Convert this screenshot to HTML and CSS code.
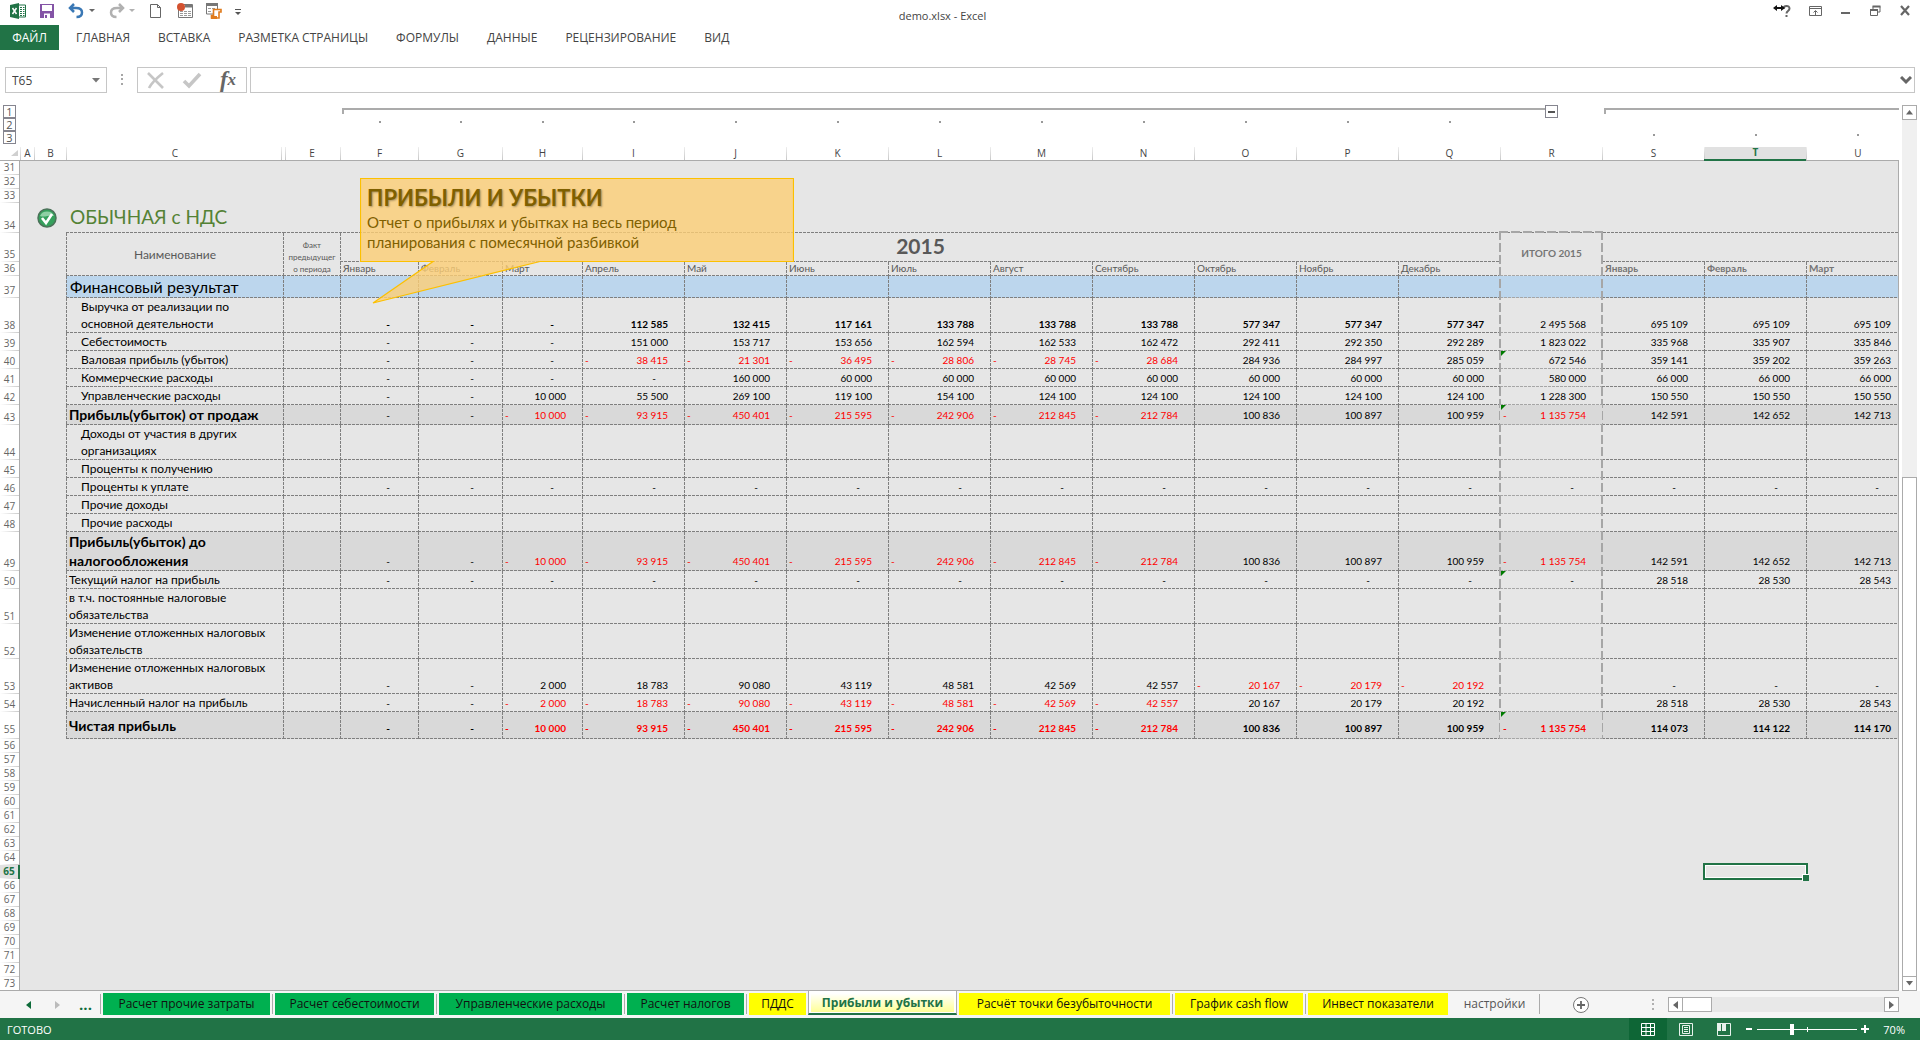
FILE: index.html
```
<!DOCTYPE html>
<html lang="ru">
<head>
<meta charset="UTF-8">
<meta name="viewport" content="width=device-width,initial-scale=1.0">
<title>demo.xlsx - Excel</title>
<link rel="stylesheet" href="styles.css">
</head>

<body>
<!-- ===== Заголовок окна ===== -->
<header class="titlebar">
  <div class="quick">
    <svg width="16" height="16" viewBox="0 0 16 16"><path d="M8 2h7.5v12H8z" fill="#fff" stroke="#217346"/><path d="M10 4.500h2M13 4.500h1.500M10 6.500h2M13 6.500h1.500M10 8.500h2M13 8.500h1.500M10 10.500h2M13 10.500h1.500M10 12.500h2M13 12.500h1.500" stroke="#217346"/><path d="M0 2l9-2v16l-9-2z" fill="#217346"/><path d="M2.500 5l4 6M6.500 5l-4 6" stroke="#fff" stroke-width="1.500"/></svg>
    <button aria-label="Сохранить"><svg width="16" height="16" viewBox="0 0 16 16"><path d="M1 1h14v14H1z" fill="#8454a6"/><path d="M3 2h10v6H3zM5 10.500h6V15H5z" fill="#fff"/><path d="M6 12h2v3H6z" fill="#8454a6"/></svg></button>
    <button aria-label="Отменить"><svg width="27" height="16" viewBox="0 0 27 16"><path d="M6 1L2 5l4 4M2 5h6c4 0 6 1.500 6 4.500S11.500 14 8.500 14" fill="none" stroke="#3a78b5" stroke-width="2.500"/><path d="M21 6h6l-3 3z" fill="#666"/></svg></button>
    <button aria-label="Вернуть"><svg width="27" height="16" viewBox="0 0 27 16"><path d="M11 1l4 4-4 4M15 5H9C5 5 3 6.500 3 9.500S5.500 14 8.500 14" fill="none" stroke="#b1b1b1" stroke-width="2.500"/><path d="M21 6h6l-3 3z" fill="#b1b1b1"/></svg></button>
    <button aria-label="Создать"><svg width="16" height="16" viewBox="0 0 16 16"><path d="M2.500 1.500h7l3 3v10h-10zM9.500 1.500v3h3" fill="#fff" stroke="#666"/></svg></button>
    <button aria-label="Записать макрос"><svg width="16" height="16" viewBox="0 0 16 16"><path d="M1.500 1.500h14v13h-14z" fill="#fff" stroke="#777"/><path d="M8 3h7" stroke="#777" stroke-width="3"/><path d="M3 8.500h3M7 8.500h3M11 8.500h3M3 10.500h3M7 10.500h3M11 10.500h3M3 12.500h3M7 12.500h3M11 12.500h3" stroke="#999"/><circle cx="4" cy="4" r="4" fill="#d35230"/></svg></button>
    <button aria-label="Макросы"><svg width="16" height="16" viewBox="0 0 16 16"><path d="M.500 1h11v10H.500z" fill="#fff" stroke="#777"/><path d="M0 1.500h12" stroke="#777" stroke-width="3"/><path d="M2 5.500h3M6 5.500h3M2 8.500h3" stroke="#999"/><path d="M7.500 6.500h7.500v2.500h-2v6H5.500v-2.500h2z" fill="#fff" stroke="#e07b1c" stroke-width="1.600"/><path d="M5 13h6v3H5z" fill="#e07b1c"/></svg></button>
    <button aria-label="Настройка панели"><svg width="6" height="16" viewBox="0 0 6 16"><path d="M0 6.500h6" stroke="#555"/><path d="M0 9h6l-3 3z" fill="#555"/></svg></button>
  </div>
  <h1 class="doc-name">demo.xlsx - Excel</h1>
  <div class="window-btns">
    <button aria-label="Справка"><svg width="20" height="16" viewBox="0 0 20 16"><path d="M10.500 6c0-4 6-4 6-.500 0 2.500-3 2.500-3 5" fill="none" stroke="#666" stroke-width="2"/><path d="M12.500 12h2v2h-2z" fill="#666"/><path d="M0 5l4-3v2h4V2l4 3-4 3V6H4v2z" fill="#111"/></svg></button>
    <button aria-label="Параметры ленты"><svg width="16" height="16" viewBox="0 0 16 16"><path d="M2.500 3.500h12v9h-12zM2.500 5.500h12M8.500 12V8M6.500 9.500l2-2 2 2" fill="none" stroke="#666"/></svg></button>
    <button aria-label="Свернуть"><svg width="16" height="16" viewBox="0 0 16 16"><path d="M4 10h9" stroke="#666" stroke-width="2"/></svg></button>
    <button aria-label="Восстановить"><svg width="16" height="16" viewBox="0 0 16 16"><path d="M3.500 7h7v5.500h-7zM6 6V3.500h7V9h-2" fill="none" stroke="#666"/><path d="M3 7h8M5.500 3.500h8" stroke="#666" stroke-width="2"/></svg></button>
    <button aria-label="Закрыть"><svg width="16" height="16" viewBox="0 0 16 16"><path d="M4 3l8 9M12 3l-8 9" stroke="#666" stroke-width="2.200"/></svg></button>
  </div>
</header>

<nav class="ribbon">
  <button class="file">ФАЙЛ</button>
  <button>ГЛАВНАЯ</button>
  <button>ВСТАВКА</button>
  <button>РАЗМЕТКА СТРАНИЦЫ</button>
  <button>ФОРМУЛЫ</button>
  <button>ДАННЫЕ</button>
  <button>РЕЦЕНЗИРОВАНИЕ</button>
  <button>ВИД</button>
</nav>

<!-- ===== Строка формул ===== -->
<div class="formula-bar">
  <div class="name-box">
    <input type="text" value="T65" aria-label="Имя ячейки">
    <button aria-label="Список имён"><svg width="8" height="5" viewBox="0 0 8 5"><path d="M0 0h8L4 4.500z" fill="#777"/></svg></button>
  </div>
  <svg class="grip" width="30" height="12" viewBox="0 0 30 12"><path d="M14 0h2v2h-2zM14 4h2v2h-2zM14 9h2v2h-2z" fill="#a6a6a6"/></svg>
  <div class="fx-btns">
    <button aria-label="Отмена"><svg width="18" height="18" viewBox="0 0 18 18"><path d="M1 2l15 15M16 2C11 6 5 11 2 17" fill="none" stroke="#c6c6c6" stroke-width="2.600"/></svg></button>
    <button aria-label="Ввод"><svg width="20" height="18" viewBox="0 0 20 18"><path d="M2 10l5 5L18 3" fill="none" stroke="#c6c6c6" stroke-width="3.600"/></svg></button>
    <button class="fx" aria-label="Вставить функцию">f<small>x</small></button>
  </div>
  <div class="formula">
    <input type="text" aria-label="Формула">
    <button aria-label="Развернуть"><svg width="12" height="9" viewBox="0 0 12 9"><path d="M1 1l5 5 5-5" fill="none" stroke="#666" stroke-width="3"/></svg></button>
  </div>
</div>

<!-- ===== Лист ===== -->
<main class="workspace">
  <div class="sheet-wrap">
    <div class="outline" id="outline">
      <div class="levels"><button>1</button><button>2</button><button>3</button></div>
      <div class="bracket first"><span class="bar"></span><button aria-label="Свернуть группу"></button></div>
      <div class="bracket second"><span class="bar"></span></div>
    </div>
    <table class="sheet" id="sheet"></table>
    <div class="callout">
      <svg width="434" height="127" viewBox="0 0 434 127"><path d="M.500.500h433v83H180L13 125l60-41.500H.500z" fill="#fdce76" fill-opacity=".8" stroke="#fcc000" stroke-width="1.200"/></svg>
      <div class="callout-text">
        <h2>ПРИБЫЛИ И УБЫТКИ</h2>
        <p>Отчет о прибылях и убытках на весь период<br>планирования с помесячной разбивкой</p>
      </div>
    </div>
  </div>
  <div class="vscroll">
    <button aria-label="Вверх"><svg width="7" height="5" viewBox="0 0 7 5"><path d="M0 4.500h7L3.500 0z" fill="#666"/></svg></button>
    <div class="track"></div>
    <div class="thumb"></div>
    <button aria-label="Вниз"><svg width="7" height="5" viewBox="0 0 7 5"><path d="M0 0h7L3.500 4.500z" fill="#666"/></svg></button>
  </div>
</main>

<!-- ===== Ярлыки листов ===== -->
<nav class="tabs">
  <div class="tab-nav">
    <button aria-label="Назад"><svg width="6" height="8" viewBox="0 0 6 8"><path d="M5 0v8L0 4z" fill="#0e6b3a"/></svg></button>
    <button aria-label="Вперёд"><svg width="6" height="8" viewBox="0 0 6 8"><path d="M1 0v8l5-4z" fill="#bbb"/></svg></button>
    <button class="more">...</button>
  </div>
  <ul class="tab-list">
    <li><button class="green">Расчет прочие затраты</button></li>
    <li><button class="green">Расчет себестоимости</button></li>
    <li><button class="green">Управленческие расходы</button></li>
    <li><button class="green">Расчет налогов</button></li>
    <li><button class="yellow">ПДДС</button></li>
    <li class="active"><button>Прибыли и убытки</button></li>
    <li><button class="yellow">Расчёт точки безубыточности</button></li>
    <li><button class="yellow">График cash flow</button></li>
    <li><button class="yellow">Инвест показатели</button></li>
    <li class="last"><button>настройки</button></li>
  </ul>
  <button class="add" aria-label="Новый лист"><svg width="18" height="18" viewBox="0 0 18 18"><circle cx="9" cy="9" r="7.500" fill="#fff" stroke="#777"/><path d="M5 9h8M9 5v8" stroke="#666" stroke-width="1.800"/></svg></button>
  <svg class="grip" width="30" height="12" viewBox="0 0 30 12"><path d="M14 0h2v2h-2zM14 4h2v2h-2zM14 9h2v2h-2z" fill="#b0b0b0"/></svg>
  <div class="hscroll">
    <button aria-label="Влево"><svg width="5" height="8" viewBox="0 0 5 8"><path d="M5 0v8L0 4z" fill="#666"/></svg></button>
    <div class="thumb"></div>
    <div class="track"></div>
    <button aria-label="Вправо"><svg width="5" height="8" viewBox="0 0 5 8"><path d="M0 0v8l5-4z" fill="#666"/></svg></button>
  </div>
</nav>

<footer class="status">
  <span>ГОТОВО</span>
  <div class="views">
    <button class="on" aria-label="Обычный"><svg width="14" height="13" viewBox="0 0 14 13"><path d="M.500.500h13v12H.500zM.500 4.500h13M.500 8.500h13M5 .500v12M9.500.500v12" fill="none" stroke="#fff"/></svg></button>
    <button aria-label="Разметка страницы"><svg width="14" height="13" viewBox="0 0 14 13"><path d="M.500.500h13v12H.500zM3.500 2.500h7v8h-7zM5 4.500h4M5 6.500h4M5 8.500h4" fill="none" stroke="#e8f2ec"/></svg></button>
    <button aria-label="Страничный"><svg width="14" height="13" viewBox="0 0 14 13"><path d="M.500.500h13v12H.500z" fill="none" stroke="#e8f2ec"/><path d="M0 0h4v8H0zM5 0h4v8H5z" fill="#e8f2ec"/></svg></button>
  </div>
  <button class="zoom-btn" aria-label="Уменьшить"><svg width="8" height="8" viewBox="0 0 8 8"><path d="M1 4h6" stroke="#fff" stroke-width="2"/></svg></button>
  <input class="zoom" type="range" min="0" max="100" value="34" aria-label="Масштаб">
  <button class="zoom-btn" aria-label="Увеличить"><svg width="8" height="8" viewBox="0 0 8 8"><path d="M0 4h8M4 0v8" stroke="#fff" stroke-width="2"/></svg></button>
  <span class="percent">70%</span>
</footer>

<script src="script.js"></script>
</body>
</html>
```
FILE: styles.css
```
/* ==== общие ==== */
*{box-sizing:border-box;margin:0;padding:0}
:root{
  --green:#217346;
  --line:#ababab;
  --dash-h:repeating-linear-gradient(90deg,#7f7f7f 0 3px,transparent 3px 4px);
  --dash-v:repeating-linear-gradient(#7f7f7f 0 3px,transparent 3px 4px);
  --dash-soft:repeating-linear-gradient(90deg,#a6a6a6 0 3px,transparent 3px 4px);
  --frame-h:repeating-linear-gradient(90deg,#a6a6a6 0 9px,transparent 9px 12px);
  --frame-v:repeating-linear-gradient(#a6a6a6 0 9px,transparent 9px 12px);
}
body{
  font-family:"Open Sans","Noto Sans",sans-serif;
  font-size:12px;color:#444;background:#fff;
  height:100vh;display:flex;flex-direction:column;overflow:hidden;
}
button{font:inherit;color:inherit;background:none;border:0;display:flex;align-items:center;justify-content:center}
input{font:inherit;color:inherit;border:0;background:none;outline:0;min-width:0}
svg{display:block;flex:none}

/* ==== заголовок и лента ==== */
.titlebar{
  height:25px;padding:3px 7px 0 10px;
  display:grid;grid-template-columns:1fr auto 1fr;align-items:start;
}
.quick{display:flex;gap:13px}
.doc-name{font-size:11px;font-weight:400;line-height:26px;margin-right:38px}
.window-btns{display:flex;justify-content:flex-end;gap:14px}

.ribbon{display:flex;height:25px;gap:28px;line-height:25px}
.ribbon .file{width:59px;background:var(--green);color:#fff;margin-right:-11px}

/* ==== строка формул ==== */
.formula-bar{display:flex;align-items:center;height:26px;margin:17px 5px 12px}
.name-box,.fx-btns,.formula{display:flex;align-items:center;height:100%;border:1px solid #c6c6c6}
.name-box{width:102px;padding:0 6px}
.name-box input{flex:1}
.fx-btns{width:110px;margin-right:3px}
.fx-btns button{flex:1}
.fx-btns .fx{font:italic bold 23px "Liberation Serif",serif;color:#666}
.fx small{font-size:17px}
.formula{flex:1;padding:0 2px 0 6px}
.formula input{flex:1}

/* ==== рабочая область ==== */
.workspace{flex:1;display:flex;min-height:0}
.sheet-wrap{flex:1;position:relative;min-width:0;overflow:hidden;border-bottom:1px solid var(--line)}

.outline{
  display:grid;height:42px;
  grid-template-rows:13px 13px 13px;
  grid-template-columns:20px 14px 32px 217px 57px 78px 84px 80px repeat(12,102px) 1fr;
}
.levels{grid-area:1/1/4/2;padding-left:3px}
.levels button,.bracket button{width:13px;height:13px;border:1px solid #85858f;font-size:11px;line-height:11px}
.levels button{color:#555}
.bracket{display:flex;padding-left:2px}
.bracket .bar{flex:1;height:6px;margin-top:3px;border-top:2px solid var(--line);border-left:2px solid var(--line)}
.bracket button{margin-right:44px}
.bracket button::before{content:"";width:7px;height:2px;background:#555}
.first{grid-area:1/6/2/19}
.second{grid-area:1/19/2/22}
.dot{width:2px;height:2px;background:#999;align-self:center;justify-self:center;margin:0 0 5px 2px}
.dot.low{grid-row:3}
.dot.high{grid-row:2}
.dot:last-child{margin-left:11px}

/* ==== таблица ==== */
.sheet{width:100%;table-layout:fixed;border-collapse:separate;border-spacing:0;color:#000;background:#e6e6e6}
.sheet th,.sheet td{overflow:visible;white-space:nowrap}
.w-num{width:20px}
.w-a{width:14px}
.w-b{width:32px}
.w-c{width:217px}
.w-e{width:57px}
.w-f{width:78px}
.w-g{width:84px}
.w-h{width:80px}
.w-m{width:102px}

.cols th{
  height:14px;padding:0 0 1px 1px;
  background:#fff linear-gradient(#eee,#c8c8c8) no-repeat left top/1px 100%;
  border-bottom:1px solid var(--line);
  font-size:10px;font-weight:400;line-height:12px;color:#444;
}
.cols th.corner{background:#fff}
.cols th.corner svg{margin-left:10px}
.cols th.col-c{background-image:linear-gradient(#eee,#c8c8c8),linear-gradient(#eee,#c8c8c8);background-position:left top,right 1px top}
.cols th.col-e{background-position:2px 0}
.cols th.col-u{padding-left:11px}
.cols th.sel{background-color:#e1e1e1;border-bottom:2px solid var(--green);color:var(--green);font-weight:700;line-height:11px}

.sheet .num{
  background:#fff linear-gradient(90deg,#fff,#ccc) no-repeat left bottom/100% 1px;
  border-right:1px solid var(--line);
  font-size:10px;font-weight:400;line-height:12px;color:#666;
  vertical-align:bottom;text-align:center;padding-bottom:2px;
}
.sheet .num.sel{background-color:#e1e1e1;border-right:2px solid var(--green);color:var(--green);font-weight:700}

.h14{height:14px}
.h18{height:18px}
.h20{height:20px}
.h22{height:22px}
.h27{height:27px}
.h29{height:29px}
.h30{height:30px}
.h35{height:35px}
.h39{height:39px}

.c{
  font-family:Lato,"Open Sans",sans-serif;font-size:10px;font-weight:400;line-height:13px;
  vertical-align:bottom;text-align:right;padding:0 16px 2px 0;
  background:var(--dash-h) no-repeat left bottom/100% 1px,var(--dash-v) no-repeat left top/1px 100%;
}
.c:last-child{padding-right:7px}
.c.dash{padding-right:28px}
.c.dash:last-child{padding-right:19px}
.c.r{background:var(--dash-soft) no-repeat left bottom/100% 1px}
.c.s,.c.top,.c.title{background:var(--dash-h) no-repeat left bottom/100% 1px}
.c .minus{float:left;padding-left:3px;font-style:normal}
.neg{color:#f00}
.b{font-weight:700}
.c.flag{position:relative}
.flag::before{
  content:"";position:absolute;left:1px;top:0;
  border-top:5px solid #007a00;border-right:5px solid transparent;
}
.c.label{font-size:12px;line-height:17px;text-align:left;padding:0 0 1px 3px}
.c.label.in{padding-left:15px}
.c.label.big{font-size:14px;line-height:19px;font-weight:700}
.c.label.section{font-size:16px;line-height:20px;padding-left:4px}
.section-row .c{background-color:#bcd6ed}
.grey .c{background-color:#d9d9d9}
.grey.h20 .c,.grey.h39 .c{padding-bottom:3px}
.grey.h20 .label,.grey.h39 .label{padding-bottom:1px}
.h27 .c{padding-bottom:4px}
.sheet .h27 .num{padding-bottom:4px}

.c.title{font-size:19px;line-height:26px;color:#548235;text-align:left;padding:0 0 3px 4px}
.check{vertical-align:bottom}
.check svg{margin:0 0 5px 3px}
.c.head{vertical-align:middle;text-align:center;padding:0 0 1px 1px;color:#595959;font-size:12px}
.c.head.fact{font-size:8px;line-height:12px;vertical-align:bottom}
.c.head.year{font-size:21px;font-weight:700;line-height:26px;padding-bottom:3px}
.c.head.total{position:relative;font-size:10px;font-weight:700;color:#757575;padding-bottom:3px}
.c.month{text-align:left;padding:0 0 2px 3px;color:#595959;line-height:12px}
.c.month.next{font-weight:700;color:#757575}

/* рамка вокруг итогового столбца, от шапки до чистой прибыли */
.frame{
  position:absolute;left:-1px;right:-1px;top:-2px;height:508px;
  background:
    var(--frame-h) no-repeat left top/100% 2px,
    var(--frame-h) no-repeat left bottom/100% 2px,
    var(--frame-v) no-repeat left top/2px 100%,
    var(--frame-v) no-repeat right top/2px 100%;
}
.cursor{position:relative}
.cursor::before{
  content:"";position:absolute;inset:-2px -2px -1px -1px;
  border:2px solid var(--green);box-shadow:inset 0 0 0 1px #fff;
}
.cursor::after{
  content:"";position:absolute;right:-3px;bottom:-2px;width:6px;height:6px;
  background:var(--green);border:solid #fff;border-width:1px 0 0 1px;
}
.edge{border-right:1px solid var(--line)}

/* ==== выноска ==== */
.callout{position:absolute;left:360px;top:73px;color:#7f6000;font-family:Lato,"Open Sans",sans-serif}
.callout-text{position:absolute;left:7px;top:6px;white-space:nowrap}
.callout h2{font-size:22px;line-height:28px;font-weight:700;text-shadow:1px 1px 2px rgba(0,0,0,.3)}
.callout p{font-size:15px;line-height:20px}

/* ==== полосы прокрутки ==== */
.vscroll{width:21px;padding:0 3px;display:flex;flex-direction:column}
.vscroll button,.hscroll button{width:15px;height:15px;flex:none;border:1px solid var(--line);background:#fff}
.vscroll .track{flex:357;background:#f0f0f0}
.vscroll .thumb{flex:499;border:1px solid var(--line);border-bottom:0}

/* ==== ярлыки ==== */
.tabs{height:27px;background:#f5f5f5;display:flex;align-items:center;padding:0 21px 0 15px}
.tab-nav{display:grid;grid-template-columns:28px 28px 29px}
.tab-nav .more{color:#0e6b3a;font-weight:700;font-size:15px;line-height:15px}
.tab-list{
  list-style:none;height:100%;display:grid;
  grid-template-columns:172px 164px 188px 122px 62px 149px 215px 133px 145px 90px;
}
.tab-list li{padding:2px 2px 3px 3px;background:linear-gradient(var(--line),var(--line)) no-repeat left 3px/1px 20px}
.tab-list button{width:100%;height:22px;line-height:22px;color:#111;white-space:nowrap}
.tab-list .green{background:#00b050}
.tab-list .yellow{background:#ff0}
.tab-list .active{
  padding:0 2px;height:25px;margin-top:-1px;background:#fff;
  border:solid var(--line);border-width:0 1px;border-bottom:2px solid var(--green);
}
.tab-list .active button{background:linear-gradient(#fff 15%,#ffff96);color:var(--green);font-weight:700;padding-top:3px}
.tab-list .active+li{background:none;padding-left:2px}
.tab-list .last{border-right:1px solid var(--line);background:none;margin:3px 0 4px;padding:0}
.tab-list .last button{color:#555;height:20px;line-height:20px}
.tabs .add{margin-left:32px}
.tabs .grip{margin-left:auto}
.hscroll{display:flex;width:231px;height:15px}
.hscroll .thumb{width:29px;border:1px solid var(--line);border-left:0;background:#fff}
.hscroll .track{flex:1;background:#e8e8e8}

/* ==== строка состояния ==== */
.status{
  height:22px;background:var(--green);color:#fff;font-size:11px;
  display:flex;align-items:center;padding:0 15px 0 7px;
}
.views{margin-left:auto;display:flex;height:100%}
.views button{width:38px}
.views .on{background:#0e6636}
.zoom-btn{width:12px}
.zoom{
  appearance:none;width:100px;height:11px;margin:0 2px;
  background:
    linear-gradient(#fff,#fff) no-repeat left center/100% 1px,
    linear-gradient(#fff,#fff) no-repeat center/1px 5px;
}
.zoom::-webkit-slider-thumb{appearance:none;width:4px;height:11px;background:#fff}
.percent{margin-left:12px}
```
FILE: script.js
```
/* колонки листа: буква -> класс ширины */
const COLS = [['A','w-a'],['B','w-b'],['C','w-c'],['E','w-e'],['F','w-f'],['G','w-g'],['H','w-h'],
  ...'IJKLMNOPQRST'.split('').map(l=>[l,'w-m']),['U','']];

const MONTHS = ['Январь','Февраль','Март','Апрель','Май','Июнь','Июль','Август','Сентябрь','Октябрь','Ноябрь','Декабрь'];
const LOSS = '-93 915|-450 401|-215 595|-242 906|-212 845|-212 784|100 836|100 897|100 959|-1 135 754';

/* [номер, высота, подпись, класс подписи, значения F..U] */
const ROWS = [
  [37,22,'Финансовый результат','section',''],
  [38,35,'Выручка от реализации по<br>основной деятельности','in','-|-|-|112 585|132 415|117 161|133 788|133 788|133 788|577 347|577 347|577 347|2 495 568|695 109|695 109|695 109'],
  [39,18,'Себестоимость','in','-|-|-|151 000|153 717|153 656|162 594|162 533|162 472|292 411|292 350|292 289|1 823 022|335 968|335 907|335 846'],
  [40,18,'Валовая прибыль (убыток)','in','-|-|-|-38 415|-21 301|-36 495|-28 806|-28 745|-28 684|284 936|284 997|285 059|672 546|359 141|359 202|359 263'],
  [41,18,'Коммерческие расходы','in','-|-|-|-|160 000|60 000|60 000|60 000|60 000|60 000|60 000|60 000|580 000|66 000|66 000|66 000'],
  [42,18,'Управленческие расходы','in','-|-|10 000|55 500|269 100|119 100|154 100|124 100|124 100|124 100|124 100|124 100|1 228 300|150 550|150 550|150 550'],
  [43,20,'Прибыль(убыток) от продаж','big','-|-|-10 000|'+LOSS+'|142 591|142 652|142 713'],
  [44,35,'Доходы от участия в других<br>организациях','in',''],
  [45,18,'Проценты к получению','in',''],
  [46,18,'Проценты к уплате','in',Array(16).fill('-').join('|')],
  [47,18,'Прочие доходы','in',''],
  [48,18,'Прочие расходы','in',''],
  [49,39,'Прибыль(убыток) до<br>налогообложения','big','-|-|-10 000|'+LOSS+'|142 591|142 652|142 713'],
  [50,18,'Текущий налог на прибыль','',Array(13).fill('-').join('|')+'|28 518|28 530|28 543'],
  [51,35,'в т.ч. постоянные налоговые<br>обязательства','',''],
  [52,35,'Изменение отложенных налоговых<br>обязательств','',''],
  [53,35,'Изменение отложенных налоговых<br>активов','','-|-|2 000|18 783|90 080|43 119|48 581|42 569|42 557|-20 167|-20 179|-20 192||-|-|-'],
  [54,18,'Начисленный налог на прибыль','','-|-|-2 000|-18 783|-90 080|-43 119|-48 581|-42 569|-42 557|20 167|20 179|20 192||28 518|28 530|28 543'],
  [55,27,'Чистая прибыль','big','-|-|-10 000|'+LOSS+'|114 073|114 122|114 170']
];
const FLAGS = [40,43,50,55];
const CHECK = '<svg width="20" height="20" viewBox="0 0 20 20"><circle cx="10" cy="10" r="9" fill="#35a05c" stroke="#4b7259" stroke-width="1.5"/><path d="M3 8a7.500 7 0 0 1 14 0c-4-2-9 2-14 0z" fill="#8ed0a4"/><path d="M5 10l4 5 6-9" fill="none" stroke="#fff" stroke-width="2.600"/></svg>';

const num = (n,extra='') => `<th scope="row" class="num${extra}">${n}</th>`;

function cell(v,i,row){
  const cls = ['c'];
  if(i===12) cls.push('r');
  if(i===13) cls.push('s');
  if(i===12 && FLAGS.includes(row)) cls.push('flag');
  if(row===55 || (row===38 && i<12)) cls.push('b');
  if(i===15) cls.push('edge');
  if(v==='-') return `<td class="${cls.join(' ')} dash">-</td>`;
  if(v[0]==='-') return `<td class="${cls.join(' ')} neg"><i class="minus">-</i>${v.slice(1)}</td>`;
  return `<td class="${cls.join(' ')}">${v}</td>`;
}

function reportRow([n,h,label,cls,vals]){
  const list = vals ? vals.split('|') : Array(16).fill('');
  const tr = cls==='section' ? ' section-row' : cls==='big' ? ' grey' : '';
  return `<tr class="h${h}${tr}">${num(n)}<td></td><td></td><td class="c label ${cls}">${label}</td><td class="c"></td>`
    + list.map((v,i)=>cell(v,i,n)).join('') + '</tr>';
}

const emptyRow = n => n===65
  ? `<tr class="h14">${num(n,' sel')}<td colspan="18"></td><td class="cursor"></td><td class="edge"></td></tr>`
  : `<tr class="h14">${num(n)}<td colspan="20" class="edge"></td></tr>`;

let html = '<colgroup><col class="w-num">' + COLS.map(c=>`<col class="${c[1]}">`).join('') + '</colgroup>';
html += '<thead><tr class="cols"><th class="corner"><svg width="7" height="6" viewBox="0 0 7 6"><path d="M7 0v6H0z" fill="#d0d0d0"/></svg></th>'
  + COLS.map(([l])=>`<th scope="col" class="col-${l.toLowerCase()}${l==='T'?' sel':''}">${l}</th>`).join('') + '</tr></thead><tbody>';
html += [31,32,33].map(emptyRow).join('');
html += `<tr class="h30">${num(34)}<td></td><td class="check">${CHECK}</td><td class="c title">ОБЫЧНАЯ с НДС</td><td class="c top edge" colspan="17"></td></tr>`;
html += `<tr class="h29">${num(35)}<td></td><td></td><th class="c head" rowspan="2">Наименование</th>
  <th class="c head fact" rowspan="2">Факт<br>предыдущег<br>о периода</th><th class="c head year" colspan="12">2015</th>
  <th class="c head r total" rowspan="2">ИТОГО 2015<div class="frame"></div></th><th class="c s edge" colspan="3"></th></tr>`;
html += `<tr class="h14">${num(36)}<td></td><td></td>`
  + MONTHS.map(m=>`<th class="c month">${m}</th>`).join('')
  + MONTHS.slice(0,3).map((m,i)=>`<th class="c month next${i===0?' s':''}${i===2?' edge':''}">${m}</th>`).join('') + '</tr>';
html += ROWS.map(reportRow).join('');
for(let n=56;n<=73;n++) html += emptyRow(n);
document.getElementById('sheet').innerHTML = html + '</tbody>';

/* точки уровней структуры над колонками */
const outline = document.getElementById('outline');
for(let col=6;col<=21;col++){
  if(col===18) continue;
  const d = document.createElement('span');
  d.className = 'dot ' + (col<18 ? 'high' : 'low');
  d.style.gridColumn = col;
  outline.appendChild(d);
}
```
